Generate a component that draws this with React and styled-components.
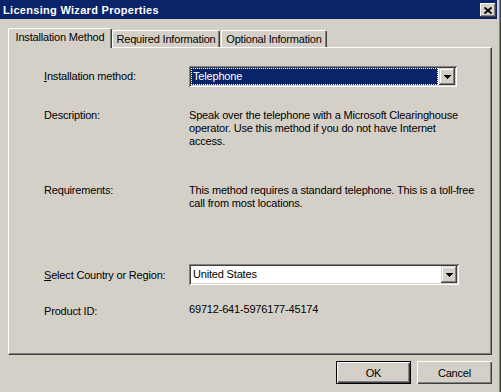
import React from 'react'
import styled, { createGlobalStyle } from 'styled-components'

const GlobalStyle = createGlobalStyle`
  body {
    margin: 0;
    background: #d4d0c8;
    font-family: "Liberation Sans", Arial, sans-serif;
    font-size: 11px;
    letter-spacing: -0.18px;
    color: #000;
  }
`

const Window = styled.div`
  width: 501px;
  height: 392px;
  box-sizing: border-box;
  background: #d4d0c8;
  border-right: 1px solid #404040;
  box-shadow: inset -1px 0 #808080;
  padding-right: 3px;
  display: flex;
  flex-direction: column;
  overflow: hidden;
`

const TitleBar = styled.div`
  height: 19px;
  box-sizing: border-box;
  background: #0a246a;
  color: #fff;
  display: flex;
  align-items: flex-start;
  justify-content: space-between;
  padding: 4px 1px 0 3px;
`

const Title = styled.div`
  font-weight: bold;
  letter-spacing: 0.3px;
  line-height: 13px;
`

const CloseButton = styled.div`
  width: 16px;
  height: 14px;
  box-sizing: border-box;
  background: #d4d0c8;
  box-shadow: inset -1px -1px #404040, inset 1px 1px #fff, inset -2px -2px #808080;
  display: flex;
  align-items: center;
  justify-content: center;
  margin-top: -1px;
`

const TabRow = styled.div`
  display: flex;
  align-items: flex-end;
  height: 19px;
  margin: 9px 0 0 8px;
`

const Tab = styled.div`
  position: relative;
  z-index: ${({ $active }) => ($active ? 1 : 0)};
  width: ${({ $width }) => $width}px;
  height: ${({ $active }) => ($active ? 20 : 17)}px;
  margin-bottom: ${({ $active }) => ($active ? -1 : 0)}px;
  margin-left: ${({ $gap }) => $gap || 0}px;
  box-sizing: border-box;
  background: #d4d0c8;
  border-top: 1px solid #fff;
  border-left: 1px solid #fff;
  border-right: 1px solid #404040;
  border-radius: 2px 2px 0 0;
  box-shadow: inset -1px 0 #808080;
  text-align: center;
  line-height: 13px;
  padding-top: 2px;
  white-space: nowrap;
`

const Panel = styled.div`
  height: 308px;
  margin: 0 5px 0 8px;
  box-sizing: border-box;
  border-top: 1px solid #fff;
  border-left: 1px solid #fff;
  border-right: 1px solid #404040;
  border-bottom: 1px solid #404040;
  box-shadow: inset -1px -1px #808080;
  padding: 18px 0 0 35px;
`

const Row = styled.div`
  display: grid;
  grid-template-columns: 145px auto;
  align-items: ${({ $center }) => ($center ? 'center' : 'start')};
  margin-top: ${({ $top }) => $top || 0}px;
`

const Label = styled.div`
  line-height: 13px;
  padding-top: ${({ $shift }) => $shift || 0}px;
  white-space: nowrap;
`

const Text = styled.div`
  line-height: 13px;
  white-space: nowrap;
`

const Combo = styled.div`
  width: ${({ $width }) => $width}px;
  height: 21px;
  box-sizing: border-box;
  background: #fff;
  padding: 2px;
  display: flex;
  box-shadow: inset 1px 1px #808080, inset -1px -1px #fff, inset 2px 2px #404040,
    inset -2px -2px #d4d0c8;
`

const Field = styled.div`
  flex: 1;
  line-height: 17px;
  padding-left: 2px;
  margin-right: 1px;
  background: ${({ $focused }) => ($focused ? '#0a246a' : '#fff')};
  color: ${({ $focused }) => ($focused ? '#fff' : '#000')};
  outline: ${({ $focused }) => ($focused ? '1px dotted #ffffc0' : 'none')};
  outline-offset: -1px;
  white-space: nowrap;
`

const DropButton = styled.div`
  width: 16px;
  height: 17px;
  box-sizing: border-box;
  background: #d4d0c8;
  box-shadow: inset -1px -1px #404040, inset 1px 1px #d4d0c8, inset -2px -2px #808080,
    inset 2px 2px #fff;
  display: flex;
  align-items: center;
  justify-content: center;
`

const ButtonRow = styled.div`
  display: flex;
  justify-content: flex-end;
  gap: 6px;
  margin: 6px 5px 0 0;
`

const Button = styled.div`
  width: 75px;
  height: 23px;
  box-sizing: border-box;
  background: #d4d0c8;
  display: flex;
  align-items: center;
  justify-content: center;
  border: ${({ $default }) => ($default ? '1px solid #000' : 'none')};
  box-shadow: inset 1px 1px #fff, inset -1px -1px #404040, inset -2px -2px #808080;
`

function Arrow() {
  return (
    <svg width="7" height="4" viewBox="0 0 7 4" shapeRendering="crispEdges">
      <rect x="0" y="0" width="7" height="1" fill="#000" />
      <rect x="1" y="1" width="5" height="1" fill="#000" />
      <rect x="2" y="2" width="3" height="1" fill="#000" />
      <rect x="3" y="3" width="1" height="1" fill="#000" />
    </svg>
  )
}

function CloseGlyph() {
  return (
    <svg width="8" height="7" viewBox="0 0 8 7">
      <path d="M0.5 0.5 L7.5 6.5 M7.5 0.5 L0.5 6.5" stroke="#000" strokeWidth="1.8" />
    </svg>
  )
}

export default function App() {
  return (
    <>
      <GlobalStyle />
      <Window>
        <TitleBar>
          <Title>Licensing Wizard Properties</Title>
          <CloseButton>
            <CloseGlyph />
          </CloseButton>
        </TitleBar>

        <TabRow>
          <Tab $active $width={104}>Installation Method</Tab>
          <Tab $width={108}>Required Information</Tab>
          <Tab $width={106} $gap={1}>Optional Information</Tab>
        </TabRow>

        <Panel>
          <Row $center>
            <Label>
              <u>I</u>nstallation method:
            </Label>
            <Combo $width={268}>
              <Field $focused>Telephone</Field>
              <DropButton>
                <Arrow />
              </DropButton>
            </Combo>
          </Row>

          <Row $top={22}>
            <Label>Description:</Label>
            <Text>
              Speak over the telephone with a Microsoft Clearinghouse
              <br />
              operator. Use this method if you do not have Internet
              <br />
              access.
            </Text>
          </Row>

          <Row $top={36}>
            <Label>Requirements:</Label>
            <Text>
              This method requires a standard telephone. This is a toll-free
              <br />
              call from most locations.
            </Text>
          </Row>

          <Row $center $top={54}>
            <Label $shift={2}>
              <u>S</u>elect Country or Region:
            </Label>
            <Combo $width={270}>
              <Field>United States</Field>
              <DropButton>
                <Arrow />
              </DropButton>
            </Combo>
          </Row>

          <Row $top={18}>
            <Label $shift={2}>Product ID:</Label>
            <Text>69712-641-5976177-45174</Text>
          </Row>
        </Panel>

        <ButtonRow>
          <Button $default>OK</Button>
          <Button>Cancel</Button>
        </ButtonRow>
      </Window>
    </>
  )
}
